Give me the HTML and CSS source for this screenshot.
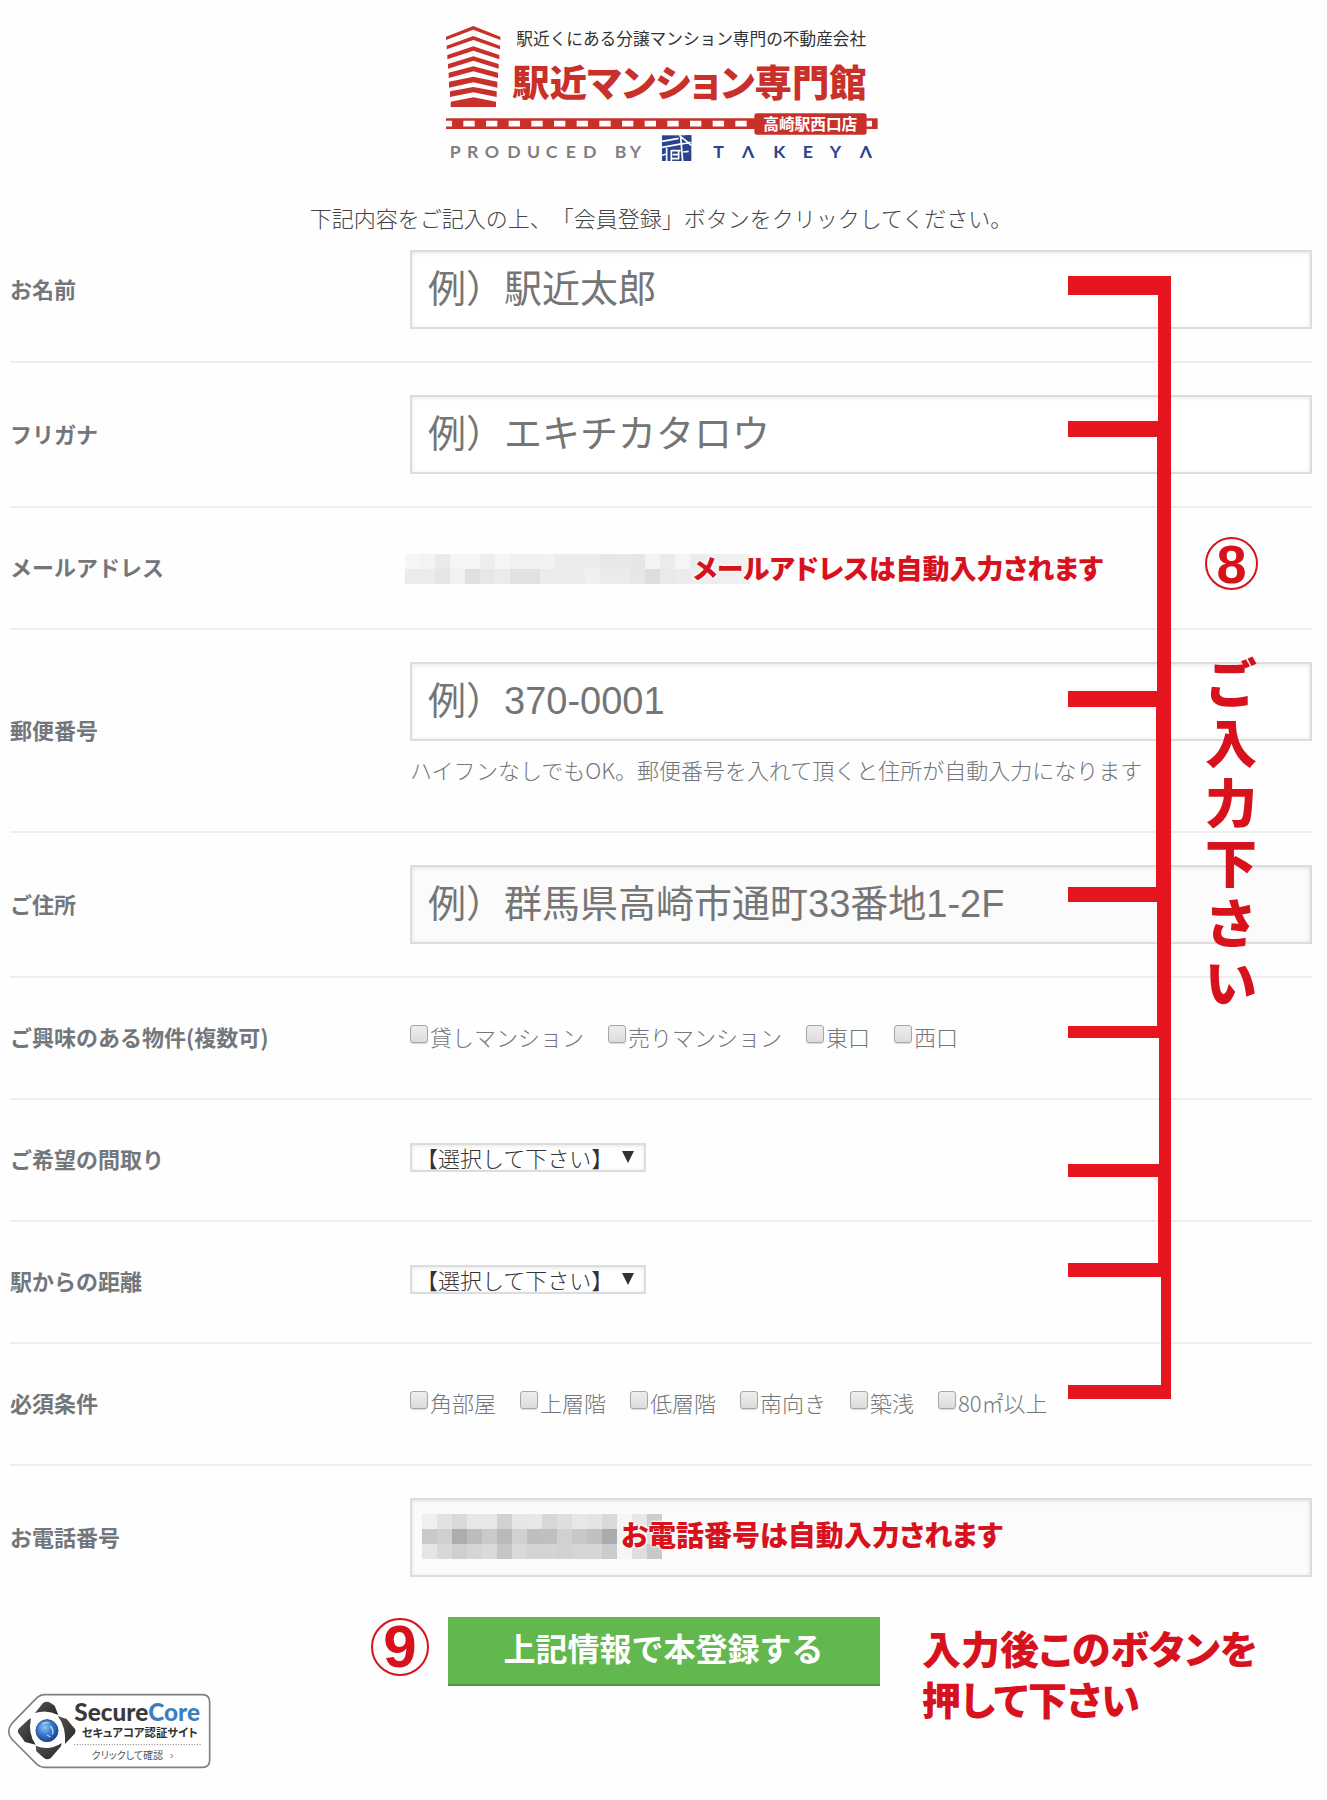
FILE: index.html
```html
<!doctype html>
<html lang="ja">
  <head>
    <meta charset="UTF-8" />
    <meta name="viewport" content="width=device-width, initial-scale=1.0" />
    <title>会員登録 | 駅近マンション専門館</title>
    <link rel="stylesheet" href="styles.css">
  </head>
  <body>
    <div class="page">
      <header class="header">
        <svg class="logo" viewBox="0 0 1320 440" role="img" aria-label="駅近マンション専門館 高崎駅西口店">
          <g fill="#c9302a">
            <path d="M15 50 97 18 178 50 178 60 97 29 15 60Z" />
            <path d="M17 77 97 48 177 77 177 88 97 60 17 88Z" />
            <path d="M19 105 97 79 175 105 175 118 97 92 19 118Z" />
            <path d="M21 132 97 109 173 132 173 146 97 122 21 146Z" />
            <path d="M23 158 97 139 171 158 171 174 97 154 23 174Z" />
            <path d="M24 185 97 170 169 185 169 203 97 187 24 203Z" />
            <path d="M27 214 97 201 167 214 167 231 97 217 27 231Z" />
            <path d="M29 245 97 232 165 245 165 261 29 261Z" />
            <path d="M15 295H1310V327H15Z" />
          </g>
          <path d="M67 311H930" stroke="#fff" stroke-width="17" stroke-dasharray="34 34" />
          <path d="M15 311H33M1270 311H1293" stroke="#fff" stroke-width="17" />
          <rect x="940" y="280" width="337" height="64" rx="8" fill="#c9302a" />
          <text class="logo-tagline" x="226" y="76">駅近くにある分譲マンション専門の不動産会社</text>
          <text class="logo-title" x="214" y="230">駅近マンション専門館</text>
          <text class="logo-branch" x="967" y="330">高崎駅西口店</text>
          <text class="logo-produced" y="413" x="26 78 131 199 258 314 374 426 480 521 566">PRODUCED BY</text>
          <g transform="translate(663 346)">
            <rect width="88" height="77" fill="#29448c" />
            <path d="M0 18 50 9M0 36 62 25M52 0 88 30M56 4 62 77M60 26 88 20M14 34 14 56 0 60M14 56V77M28 44V77M28 46H56M32 58H52M50 44V68M28 70H52M64 50 80 48" fill="none" stroke="#fff" stroke-width="5" />
            <path d="M68 0H88V22Z" fill="#29448c" />
          </g>
          <text class="logo-takeya" y="413" x="817 903 997 1085 1166 1256">TΛKEYΛ</text>
        </svg>
        <p class="intro">下記内容をご記入の上、「会員登録」ボタンをクリックしてください。</p>
      </header>

      <form id="registerForm">
        <div class="form-row">
          <label class="form-label" for="name">お名前</label>
          <input class="form-input" type="text" id="name" name="name" placeholder="例）駅近太郎" />
        </div>

        <div class="form-row">
          <label class="form-label" for="kana">フリガナ</label>
          <input class="form-input" type="text" id="kana" name="kana" placeholder="例）エキチカタロウ" />
        </div>

        <div class="form-row">
          <span class="form-label">メールアドレス</span>
          <div class="form-field email-field">
            <div class="mosaic mosaic-email" id="mosaicEmail"></div>
            <span class="note note-email">メールアドレスは自動入力されます</span>
          </div>
        </div>

        <div class="form-row">
          <label class="form-label" for="zip">郵便番号</label>
          <div class="form-field">
            <input class="form-input" type="text" id="zip" name="zip" placeholder="例）370-0001" />
            <p class="hint">ハイフンなしでもOK。郵便番号を入れて頂くと住所が自動入力になります</p>
          </div>
        </div>

        <div class="form-row">
          <label class="form-label" for="address">ご住所</label>
          <input class="form-input readonly" type="text" id="address" name="address" placeholder="例）群馬県高崎市通町33番地1-2F" readonly />
        </div>

        <div class="form-row">
          <span class="form-label" id="interestLabel">ご興味のある物件(複数可)</span>
          <div class="check-group" role="group" aria-labelledby="interestLabel">
            <label class="check"><input type="checkbox" name="interest" value="rent" />貸しマンション</label>
            <label class="check"><input type="checkbox" name="interest" value="sale" />売りマンション</label>
            <label class="check"><input type="checkbox" name="interest" value="east" />東口</label>
            <label class="check"><input type="checkbox" name="interest" value="west" />西口</label>
          </div>
        </div>

        <div class="form-row">
          <label class="form-label" for="layout">ご希望の間取り</label>
          <div class="select-wrap">
            <select class="form-select" id="layout" name="layout">
              <option>【選択して下さい】</option>
            </select>
          </div>
        </div>

        <div class="form-row">
          <label class="form-label" for="distance">駅からの距離</label>
          <div class="select-wrap">
            <select class="form-select" id="distance" name="distance">
              <option>【選択して下さい】</option>
            </select>
          </div>
        </div>

        <div class="form-row">
          <span class="form-label" id="conditionLabel">必須条件</span>
          <div class="check-group" role="group" aria-labelledby="conditionLabel">
            <label class="check"><input type="checkbox" name="condition" value="corner" />角部屋</label>
            <label class="check"><input type="checkbox" name="condition" value="high" />上層階</label>
            <label class="check"><input type="checkbox" name="condition" value="low" />低層階</label>
            <label class="check"><input type="checkbox" name="condition" value="south" />南向き</label>
            <label class="check"><input type="checkbox" name="condition" value="new" />築浅</label>
            <label class="check"><input type="checkbox" name="condition" value="80" />80㎡以上</label>
          </div>
        </div>

        <div class="form-row last-row">
          <label class="form-label" for="tel">お電話番号</label>
          <div class="form-field tel-field">
            <input class="form-input readonly" type="tel" id="tel" name="tel" readonly />
            <div class="mosaic mosaic-tel" id="mosaicTel"></div>
            <span class="note note-tel">お電話番号は自動入力されます</span>
          </div>
        </div>

        <div class="button-group">
          <button type="submit" class="submit-btn">上記情報で本登録する</button>
        </div>
      </form>

      <a class="secure-link" href="#">
        <svg class="secure" viewBox="20 24 612 228" role="img" aria-label="SecureCore">
          <defs>
            <radialGradient id="orb" cx="0.4" cy="0.35" r="0.7">
              <stop offset="0" stop-color="#8fc4f2" />
              <stop offset="0.5" stop-color="#3a78cf" />
              <stop offset="1" stop-color="#163a86" />
            </radialGradient>
            <linearGradient id="blade" x1="0" y1="0" x2="1" y2="1">
              <stop offset="0" stop-color="#5a5250" />
              <stop offset="1" stop-color="#25282b" />
            </linearGradient>
          </defs>
          <path d="M132 29H606Q628 29 628 51V225Q628 247 606 247H132Q120 247 110 238L34 162Q16 139 34 116L110 38Q120 29 132 29Z" fill="#fff" stroke="#808080" stroke-width="5" />
          <g fill="url(#blade)">
            <path d="M104 84 128 54Q139 46 151 54L163 62 174 90Q140 72 104 84Z" />
            <path d="M172 93 199 102 224 132Q229 139 223 146L194 177Q198 126 172 93Z" />
            <path d="M184 174 182 184 152 218Q141 227 130 218L108 199 106 182Q146 200 184 174Z" />
            <path d="M106 179 74 171 54 144Q50 138 55 131L84 104 92 100Q82 146 106 179Z" />
          </g>
          <circle cx="140" cy="137" r="33" fill="url(#orb)" stroke="#2a4f96" stroke-width="3" />
          <path d="M150 124q12 12 6 24M126 118q10-8 20-4M140 150l10 6" fill="none" stroke="#a9dcf5" stroke-width="4" />
          <text class="secure-name" x="222" y="108">Secure<tspan fill="#3b7fc0">Core</tspan></text>
          <text class="secure-sub" x="244" y="156">セキュアコア認証サイト</text>
          <path d="M222 179H604" stroke="#777" stroke-width="3" stroke-dasharray="3 5" />
          <text class="secure-click" x="274" y="221">クリックして確認</text>
          <path d="M511 207 517 213 511 219" fill="none" stroke="#666" stroke-width="3" />
        </svg>
      </a>

      <!-- instructions drawn over the form -->
      <svg class="bracket" viewBox="0 0 103 1128" aria-hidden="true">
        <path fill="#e71520" d="M0 0H103V1123H0V1109H93V1001H0V987H90V901H0V888H91V762H0V750H89V626H0V611H88V431H0V415H89V161H0V145H90V19H0Z" />
      </svg>
      <div class="step step-8">8</div>
      <p class="vertical-note">ご入力下さい</p>
      <div class="step step-9">9</div>
      <p class="button-note">入力後このボタンを<br />押して下さい</p>
    </div>

    <script>
      const mosaics = {
        mosaicEmail: [
          "f6f6f6 f3f3f3 e9eaea f4f6f5 f4f6f5 edefee f4f5f5 f0f2f1 f0f2f1 f2f2f2 ececec ececed ebedec e7e7e7 e8e8e9 e5e6e8 f1f4f3 eaecec f5f5f6 ececed eef0ef eff1f0 f0f2f1",
          "ebebeb ececec e5e6e8 f0f2f1 dfe0e2 e7e7e8 ebebeb dfe1e2 dfe1e2 ececec ececec ececec f0f0f0 ebebeb ebebeb e7e7e8 dddddd e8e9e9 ebebeb eeeeee ededed efefef f0f0f0",
        ],
        mosaicTel: [
          "f0f0f0 e1e2e4 d7d9db e7e7e7 e7e7e7 d0d2d1 e6e6e6 e8e8e8 d5d7d9 dedede e7e7e7 e3e5e4 d7d9db f6f6f6 e8e8e8 cccece",
          "c8c9c9 cfd1d0 acadaf bbbcbc cacaca b9babc d0d2d1 bebec0 bfc0c0 d0d2d1 c8c8c8 c0c0c0 aaabad f4f4f4 eeeeee dcdcdc",
          "e5e5e5 d7d8d8 cfcfd1 d4d5d7 dadadc c5c6c8 d9d9d9 d3d4d6 d3d4d6 d1d2d2 d6d6d8 d5d6d8 cacbcd f6f6f6 dddee0 c8c8c8",
        ],
      };

      for (const [id, rows] of Object.entries(mosaics)) {
        const box = document.getElementById(id);
        rows.join(" ").split(" ").forEach((color) => {
          const cell = document.createElement("i");
          cell.style.background = "#" + color;
          box.appendChild(cell);
        });
      }
    </script>
  </body>
</html>
```

FILE: styles.css
```css
* {
  box-sizing: border-box;
}
body {
  margin: 0;
  background: #fefefe;
  color: #73767b;
  font-family: "Noto Sans CJK JP", sans-serif;
  font-size: 22px;
  font-weight: 300;
  line-height: 32px;
  text-spacing-trim: space-all;
}
p {
  margin: 0;
}
.page {
  position: relative;
  padding: 20px 15px 20px 10px;
}
.header {
  display: flex;
  flex-direction: column;
  align-items: center;
  gap: 34px;
  margin-bottom: 17px;
  color: #444;
}
.logo {
  display: block;
  width: 440px;
}
.logo-tagline {
  font-size: 50px;
  font-weight: 400;
  fill: #333;
}
.logo-title {
  font-size: 112px;
  font-weight: 900;
  font-feature-settings: "palt";
  fill: #c9302a;
}
.logo-branch {
  font-size: 47px;
  font-weight: 700;
  fill: #fff;
}
.logo-produced,
.logo-takeya {
  font-family: Lato, "Noto Sans", sans-serif;
  font-size: 53px;
  font-weight: 700;
  fill: #7f7f7f;
}
.logo-takeya {
  fill: #29448c;
}

/* form */
.form-row {
  display: grid;
  grid-template-columns: 400px 1fr;
  align-items: center;
  min-height: 122px;
  padding: 32px 0;
  border-bottom: 2px solid #eee;
}
.form-row:first-child {
  padding-top: 0;
  min-height: 0;
}
.form-row.last-row {
  border-bottom: none;
}
.form-label {
  padding-bottom: 3px;
  font-weight: 700;
}
.form-field {
  position: relative;
}
.form-input {
  display: block;
  width: 100%;
  height: 79px;
  padding: 0 16px;
  border: 2px solid #dcdcdc;
  border-radius: 0;
  background: #fff;
  box-shadow: inset 0 1px 4px rgba(0, 0, 0, 0.1);
  font-family: "Liberation Sans", "Noto Sans CJK JP", sans-serif;
  font-size: 38px;
  font-weight: 400;
  color: #444;
}
.form-input::placeholder {
  color: #757575;
  opacity: 1;
}
.form-input.readonly {
  background: #fbfbfb;
}
.hint {
  padding: 12px 0 14px;
}
.check-group {
  display: flex;
  flex-wrap: wrap;
  gap: 24px;
  padding-bottom: 3px;
}
.check {
  display: flex;
  align-items: center;
  gap: 2px;
}
.check input {
  appearance: none;
  width: 18px;
  height: 18px;
  margin: 0 0 4px;
  border: 1px solid #a6a6a6;
  border-radius: 3px;
  background: linear-gradient(#eee, #dcdcdc);
  box-shadow: 0 1px 1px rgba(0, 0, 0, 0.15);
}
.check input:checked {
  background: #666;
}
.select-wrap {
  position: relative;
  justify-self: start;
  margin-bottom: 4px;
}
.select-wrap::after {
  content: "";
  position: absolute;
  top: 8px;
  right: 12px;
  border: 6px solid transparent;
  border-top: 12px solid #333;
  border-bottom: none;
  pointer-events: none;
}
.form-select {
  display: block;
  appearance: none;
  width: 236px;
  height: 29px;
  padding: 0 0 0 4px;
  border: 2px solid #dcdcdc;
  border-radius: 0;
  background: #fff;
  box-shadow: inset 0 1px 4px rgba(0, 0, 0, 0.1);
  font: inherit;
  line-height: 25px;
  color: #333;
}
.button-group {
  display: flex;
  justify-content: center;
  margin: 8px 0 7px 5px;
}
.submit-btn {
  width: 432px;
  height: 69px;
  padding: 0 0 6px;
  border: none;
  border-bottom: 2px solid #4f9a3f;
  background: #62b74f;
  color: #fff;
  font-family: inherit;
  font-size: 32px;
  font-weight: 700;
  cursor: pointer;
}
.submit-btn:hover {
  background: #57a846;
}

/* SecureCore badge */
.secure-link {
  display: inline-block;
  margin-left: -3px;
}
.secure {
  display: block;
  width: 204px;
}
.secure-name {
  font-family: Lato, sans-serif;
  font-size: 73px;
  font-weight: 900;
  fill: #3a3a3c;
}
.secure-sub {
  font-size: 34px;
  font-weight: 700;
  font-feature-settings: "palt";
  fill: #333;
}
.secure-click {
  font-size: 30px;
  font-weight: 400;
  font-feature-settings: "palt";
  fill: #555;
}

/* hidden personal data */
.mosaic {
  display: grid;
  grid-auto-rows: 15px;
}
.email-field {
  display: flex;
  height: 30px;
  margin: 2px 0 0 -5px;
}
.mosaic-email {
  grid-template-columns: repeat(23, 15px);
}
.mosaic-tel {
  position: absolute;
  top: 16px;
  left: 12px;
  grid-template-columns: repeat(16, 15px);
}

/* red notes */
.note,
.step,
.vertical-note,
.button-note {
  color: #d7121d;
  font-weight: 900;
}
.note {
  position: absolute;
  font-size: 28px;
  font-feature-settings: "palt";
  white-space: nowrap;
  text-shadow:
    0 0 3px #fff,
    0 0 3px #fff,
    0 0 3px #fff;
}
.note-email {
  top: -2px;
  left: 288px;
  font-size: 27px;
}
.note-tel {
  top: 20px;
  left: 211px;
}
.bracket {
  position: absolute;
  top: 276px;
  right: 156px;
  width: 103px;
}
.step {
  position: absolute;
  display: flex;
  align-items: center;
  justify-content: center;
  border: 2px solid #d7121d;
  border-radius: 50%;
  font-family: "Liberation Sans", sans-serif;
  font-weight: 700;
}
.step-8 {
  top: 537px;
  right: 69px;
  width: 53px;
  height: 53px;
  font-size: 54px;
}
.step-9 {
  top: 1618px;
  left: 371px;
  width: 58px;
  height: 58px;
  font-size: 60px;
}
.vertical-note {
  position: absolute;
  top: 651px;
  right: 70px;
  width: 52px;
  font-size: 52px;
  line-height: 60px;
  word-break: break-all;
}
.button-note {
  position: absolute;
  top: 1622px;
  left: 922px;
  font-size: 39px;
  line-height: 51px;
  font-feature-settings: "palt";
}
```
